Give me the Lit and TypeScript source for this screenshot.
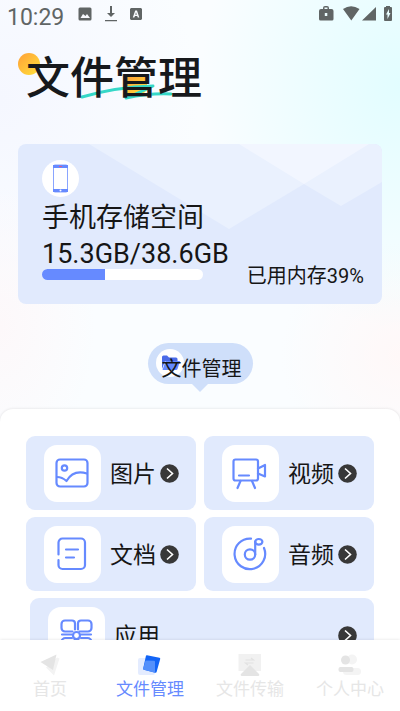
import { LitElement, html, css, svg, nothing, TemplateResult } from "lit";
import { customElement, property } from "lit/decorators.js";

const tileIcons: Record<string, TemplateResult> = {
  image: svg`
    <rect x="4.500" y="6.500" width="31" height="27" rx="3.500"/>
    <circle cx="12.500" cy="15" r="2.700"/>
    <path d="M5 24c4 0 6.500 1.300 9.500 4 4-7 11-10.500 20.500-7.500"/>`,
  video: svg`
    <rect x="3.500" y="6.500" width="24.500" height="21" rx="2"/>
    <path d="M28 15.500l7-3.500v11.500l-7-3M9 22.500h10M10.500 28l-3 7M22 28l3 7"/>`,
  doc: svg`
    <path d="M6.500 20.500V8.500a4 4 0 0 1 4-4h18.500a4 4 0 0 1 4 4v22.500a4 4 0 0 1-4 4H10.500a4 4 0 0 1-4-4v-5M14 15.500h12M14 23.500h8"/>`,
  audio: svg`
    <path d="M21 4.600A15.300 15.300 0 1 0 34 14"/>
    <circle cx="20" cy="20.500" r="5.200"/>
    <path d="M25.200 20.500V7.500"/><ellipse cx="28.800" cy="7.800" rx="3.600" ry="2.800"/>`,
  apps: svg`
    <path d="M16.500 16.500H9a3.500 3.500 0 0 1-3.500-3.500V9A3.500 3.500 0 0 1 9 5.500h7a3 3 0 0 1 3 3v6M23.500 16.500H32a3.500 3.500 0 0 0 3.500-3.500V9A3.500 3.500 0 0 0 32 5.500h-7a3 3 0 0 0-3 3v6"/>
    <path d="M16 19.500H6M25 19.500h10M16 23H9.500a4 4 0 0 0-4 4v4a4 4 0 0 0 4 4H15a3.500 3.500 0 0 0 3.500-3.500V25M25 23h6.500a4 4 0 0 1 4 4v4a4 4 0 0 1-4 4H26a3.500 3.500 0 0 1-3.500-3.500V25"/>
    <circle cx="20.500" cy="20.500" r="3.500"/>`,
};

const tabIcons: Record<string, TemplateResult> = {
  home: svg`
    <path d="M20 6.500l2.500 1-5.500 17-8-8z" fill="#f3f3f3"/>
    <path d="M3.500 11L19.500 3.500 16 19z" fill="#e4e4e4"/>`,
  files: svg`
    <rect x="1" y="7" width="17" height="17" rx="2" fill="#e4ecff"/>
    <path d="M10 4.200l12.500 2.600q1 .2.700 1.200l-3.600 13q-.3 1-1.300.8L6.900 18.700q-1-.2-.7-1.200L8.900 5q.2-1 1.100-.8z" fill="#1264f6"/>
    <path d="M8.500 9.500l8.500.3q1 0 1 1v11L6.900 18.700q-1-.2-.7-1.200z" fill="#5490fb"/>`,
  transfer: svg`
    <rect x="1.500" y="3" width="22.500" height="17" fill="#f1f1f1"/>
    <path d="M13 14l9 9q1 2-1 2H5q-2 0-1-2z" fill="#e4e4e4"/>
    <path d="M8.500 9h8l-2.500-2M16.500 12h-8l2.500 2" fill="none" stroke="#e2e2e2" stroke-width="1.200"/>`,
  user: svg`
    <circle cx="15" cy="8.500" r="5" fill="#f4f4f4"/>
    <rect x="6" y="17" width="18" height="7" rx="3.500" fill="#f4f4f4"/>
    <circle cx="8.500" cy="9" r="4.500" fill="#e4e4e4"/>
    <rect x="1.500" y="16" width="15" height="5" rx="2" fill="#e4e4e4"/>`,
};

@customElement("file-tile")
class FileTile extends LitElement {
  @property() label = "";
  @property() icon = "";

  static styles = css`
    :host { display: block; }
    .tile {
      box-sizing: border-box; width: 100%; height: 74px; border: 0; margin: 0;
      padding: 0 17px 0 18px; border-radius: 9px; background: #e1eafd; color: #161616;
      display: flex; align-items: center; font: inherit; font-size: 23px;
      line-height: 32px; text-align: left;
    }
    .box {
      width: 57px; height: 57px; border-radius: 13px; background: #fff;
      display: grid; place-items: center; flex: none; margin-right: 9px;
    }
    .glyph {
      width: 40px; height: 40px; fill: none; stroke: #668aff; stroke-width: 2.2;
      stroke-linecap: round; stroke-linejoin: round;
    }
    .label { flex: 1; white-space: nowrap; padding-top: 4px; }
    .go { width: 19px; height: 19px; flex: none; }
  `;

  render() {
    return html`<button class="tile" type="button">
      <span class="box"><svg class="glyph" viewBox="1 0 40 40" aria-hidden="true">${tileIcons[this.icon]}</svg></span>
      <span class="label">${this.label}</span>
      <svg class="go" viewBox="0 0 19 19" aria-hidden="true">
        <circle cx="9.500" cy="9.500" r="9.300" fill="#383838"/>
        <path d="M7 4.500l5.500 5L7 14.500" fill="none" stroke="#fff" stroke-width="1.600"/>
      </svg>
    </button>`;
  }
}

@customElement("app-root")
class AppRoot extends LitElement {
  static styles = css`
    :host {
      display: flex; flex-direction: column; height: 100vh; overflow: hidden;
      font-family: Roboto, "Noto Sans CJK SC", sans-serif; color: #161616;
      background:
        radial-gradient(ellipse 50% 34% at 100% 12%, #e2fdff, #e2fdff00),
        radial-gradient(ellipse 30% 16% at 100% 50%, #fff8f8, #fff8f800),
        radial-gradient(ellipse 24% 20% at 0% 46%, #fdf8fa, #fdf8fa00),
        radial-gradient(ellipse 50% 30% at 0% 14%, #f5f7ff, #f5f7ff00),
        #fafdff;
    }
    .status {
      flex: none; height: 34px; padding: 0 7px; display: flex;
      align-items: center; color: #606565; font-size: 23px;
    }
    .status svg { display: block; fill: currentColor; }
    .left, .right { display: flex; align-items: center; height: 26px; padding-bottom: 7px; }
    .left { gap: 13px; margin-left: 14px; }
    .right { margin-left: auto; }
    .content { flex: 1; min-height: 0; overflow-y: auto; scrollbar-width: none; display: flex; flex-direction: column; }
    .heading { position: relative; margin: 10px 18px 0; padding: 3px 0 0 8px; height: 61px; flex: none; }
    .title { position: relative; margin: 0; font-size: 44px; line-height: 64px; font-weight: 500; color: #17191c; }
    .accent { position: absolute; left: 0; top: 0; width: 190px; height: 64px; }
    .storage {
      position: relative; flex: none; margin: 36px 18px 0; padding: 16px 18px 24px 24px;
      border-radius: 8px; background: #e1eafd; overflow: hidden;
    }
    .peaks { position: absolute; left: 0; top: 0; width: 100%; height: 100%; }
    .body { position: relative; }
    .phone { display: block; width: 37px; height: 37px; margin-bottom: 3px; }
    .name, .amount { margin: 0; font-size: 27px; font-weight: 400; line-height: 36px; white-space: nowrap; }
    .usage { display: flex; justify-content: space-between; gap: 20px; height: 8px; }
    .bar {
      appearance: none; border: 0; flex: 0 1 161px; min-width: 0; height: 11px; border-radius: 6px;
      overflow: hidden; background: #fff; display: block; margin-top: -3px;
    }
    .bar::-webkit-progress-bar { background: #fff; }
    .bar::-webkit-progress-value { background: #668aff; }
    .percent { font-size: 20px; line-height: 28px; margin-top: -10px; white-space: nowrap; }
    .pill {
      position: relative; flex: none; align-self: center; margin-top: 39px; height: 41px;
      box-sizing: border-box; padding: 10px 11px 0 14px; border-radius: 21px; background: #cfdffa;
      font-size: 20px; line-height: 32px;
    }
    .pill::after {
      content: ""; position: absolute; left: 50%; top: 100%; margin-left: -8px;
      border: 8px solid transparent; border-bottom: 0; border-top-color: #cfdffa;
    }
    .folder { position: absolute; left: 8px; top: 6px; width: 28px; height: 28px; }
    .pilltext { position: relative; }
    .sheet {
      flex: none; margin-top: 25px; padding: 27px 26px; border-radius: 13px 13px 0 0; background: #fff;
      box-shadow: 0 0 3px #0000001f; display: grid; grid-template-columns: 1fr 1fr; gap: 7px 8px;
    }
    .wide { grid-column: 1 / -1; margin-left: 4px; }
    .tabs {
      position: relative; flex: none; height: 71px; box-sizing: border-box; padding-top: 11px;
      display: grid; grid-template-columns: repeat(4, 1fr); background: #fff; box-shadow: 0 0 3px #0000001f;
    }
    .tab {
      display: flex; flex-direction: column; align-items: center; color: #e6e6e6;
      text-decoration: none; font-size: 17px; line-height: 24px; white-space: nowrap;
    }
    .tab[aria-current] { color: #668aff; }
    .tab svg { width: 26px; height: 26px; display: block; }
  `;

  private tabs = [
    { icon: "home", label: "首页", current: false },
    { icon: "files", label: "文件管理", current: true },
    { icon: "transfer", label: "文件传输", current: false },
    { icon: "user", label: "个人中心", current: false },
  ];

  render() {
    return html`
      <header class="status">
        <span>10:29</span>
        <span class="left">
          <svg width="14" height="14" viewBox="0 0 14 14"><path fill-rule="evenodd" d="M2 .5h10q1.500 0 1.500 1.500v10q0 1.500-1.500 1.500H2Q.5 13.500.5 12V2Q.5.5 2 .5zM2.500 11h9.500L9 7 7.500 9 5 7z"/></svg>
          <svg width="12" height="16" viewBox="0 0 12 16"><path d="M5 0h2v7h3l-4 4-4-4h3zM0 14h12v1.300H0z"/></svg>
          <svg width="12" height="12" viewBox="0 0 12 12"><path fill-rule="evenodd" d="M1 0h10l1 1v10l-1 1H1l-1-1V1zM5.200 2.500L2.800 9.500h1.500L5 8h2.200l.6 1.500h1.500L7 2.500zM6 4.300L6.800 6.800H5.300z"/></svg>
        </span>
        <span class="right">
          <svg width="75" height="16" viewBox="0 0 75 16">
            <path fill-rule="evenodd" d="M5 3V2q0-2 2-2h2q2 0 2 2v1h2.500q2 0 2 2v8q0 1.500-1.500 1.500H2.500Q1 14.500 1 13V5q0-2 2-2zM6.500 3h3V1.500h-3zM6.800 7v3h2.500V7z"/>
            <path d="M25 3q8-5.500 16.500 0l-8.200 11.500zM44 14.500L58 1v13.500z"/>
            <path fill-rule="evenodd" d="M67 1h1V0h4v1h1q1 0 1 1v12q0 1-1 1h-6q-1 0-1-1V2q0-1 1-1zM71 3l-3 5.500h1.500V13l3-6H71z"/>
          </svg>
        </span>
      </header>
      <main class="content">
        <div class="heading">
          <svg class="accent" viewBox="0 0 190 64" aria-hidden="true">
            <defs><linearGradient id="sun" x1="0" y1="0" x2="1" y2="1"><stop offset="0" stop-color="#ff9f38"/><stop offset="1" stop-color="#ffe23a"/></linearGradient></defs>
            <circle cx="11" cy="20" r="11" fill="url(#sun)"/>
            <path d="M109 32h20v14l-3 3h-17z" fill="url(#sun)"/>
            <path d="M64 53q34-10 71-11-10 5-27 12 24-5 45-4" fill="none" stroke="#35d8c8" stroke-width="3" stroke-linecap="round" stroke-linejoin="round"/>
          </svg>
          <h1 class="title">文件管理</h1>
        </div>
        <section class="storage">
          <svg class="peaks" viewBox="0 0 364 160" preserveAspectRatio="none" aria-hidden="true">
            <path d="M71 0h293v38l-41 24-37-22-75 45z" fill="#eaf1fe"/>
            <path d="M221 0h130l-65 40z" fill="#f2f6ff"/>
          </svg>
          <div class="body">
            <svg class="phone" viewBox="0 0 37 37" aria-hidden="true">
              <circle cx="18.500" cy="18.500" r="18.500" fill="#fff"/>
              <rect x="11.500" y="5" width="14" height="27" rx="1.500" fill="#fff" stroke="#8aa5ff"/>
              <path d="M11 5h15v3H11zM11 29h15v3H11z" fill="#668aff"/>
              <path d="M17 6.500h3" stroke="#e05b8d"/><circle cx="18.500" cy="30.500" r="1" fill="#fff"/>
            </svg>
            <h2 class="name" id="storage-name">手机存储空间</h2>
            <p class="amount">15.3GB/38.6GB</p>
            <div class="usage">
              <progress class="bar" max="100" value="39" aria-labelledby="storage-name"></progress>
              <span class="percent">已用内存39%</span>
            </div>
          </div>
        </section>
        <div class="pill">
          <svg class="folder" viewBox="0 0 28 28" aria-hidden="true">
            <circle cx="14" cy="14" r="14" fill="#fff"/>
            <path d="M6 8q0-1.500 1.500-1.500H11l2 2h7q1.500 0 1.500 1.500v2H9l-3 8z" fill="#4b6be8"/>
            <path d="M9.500 12H24l-2.500 8q-.3 1-1.500 1H6.500z" fill="#668aff"/>
          </svg>
          <span class="pilltext">文件管理</span>
        </div>
        <section class="sheet">
          <file-tile icon="image" label="图片"></file-tile>
          <file-tile icon="video" label="视频"></file-tile>
          <file-tile icon="doc" label="文档"></file-tile>
          <file-tile icon="audio" label="音频"></file-tile>
          <file-tile class="wide" icon="apps" label="应用"></file-tile>
        </section>
      </main>
      <nav class="tabs">
        ${this.tabs.map((t) => html`<a class="tab" href="#${t.icon}" aria-current=${t.current ? "page" : nothing}>
          <svg viewBox="0 0 26 26" aria-hidden="true">${tabIcons[t.icon]}</svg>${t.label}</a>`)}
      </nav>`;
  }
}
